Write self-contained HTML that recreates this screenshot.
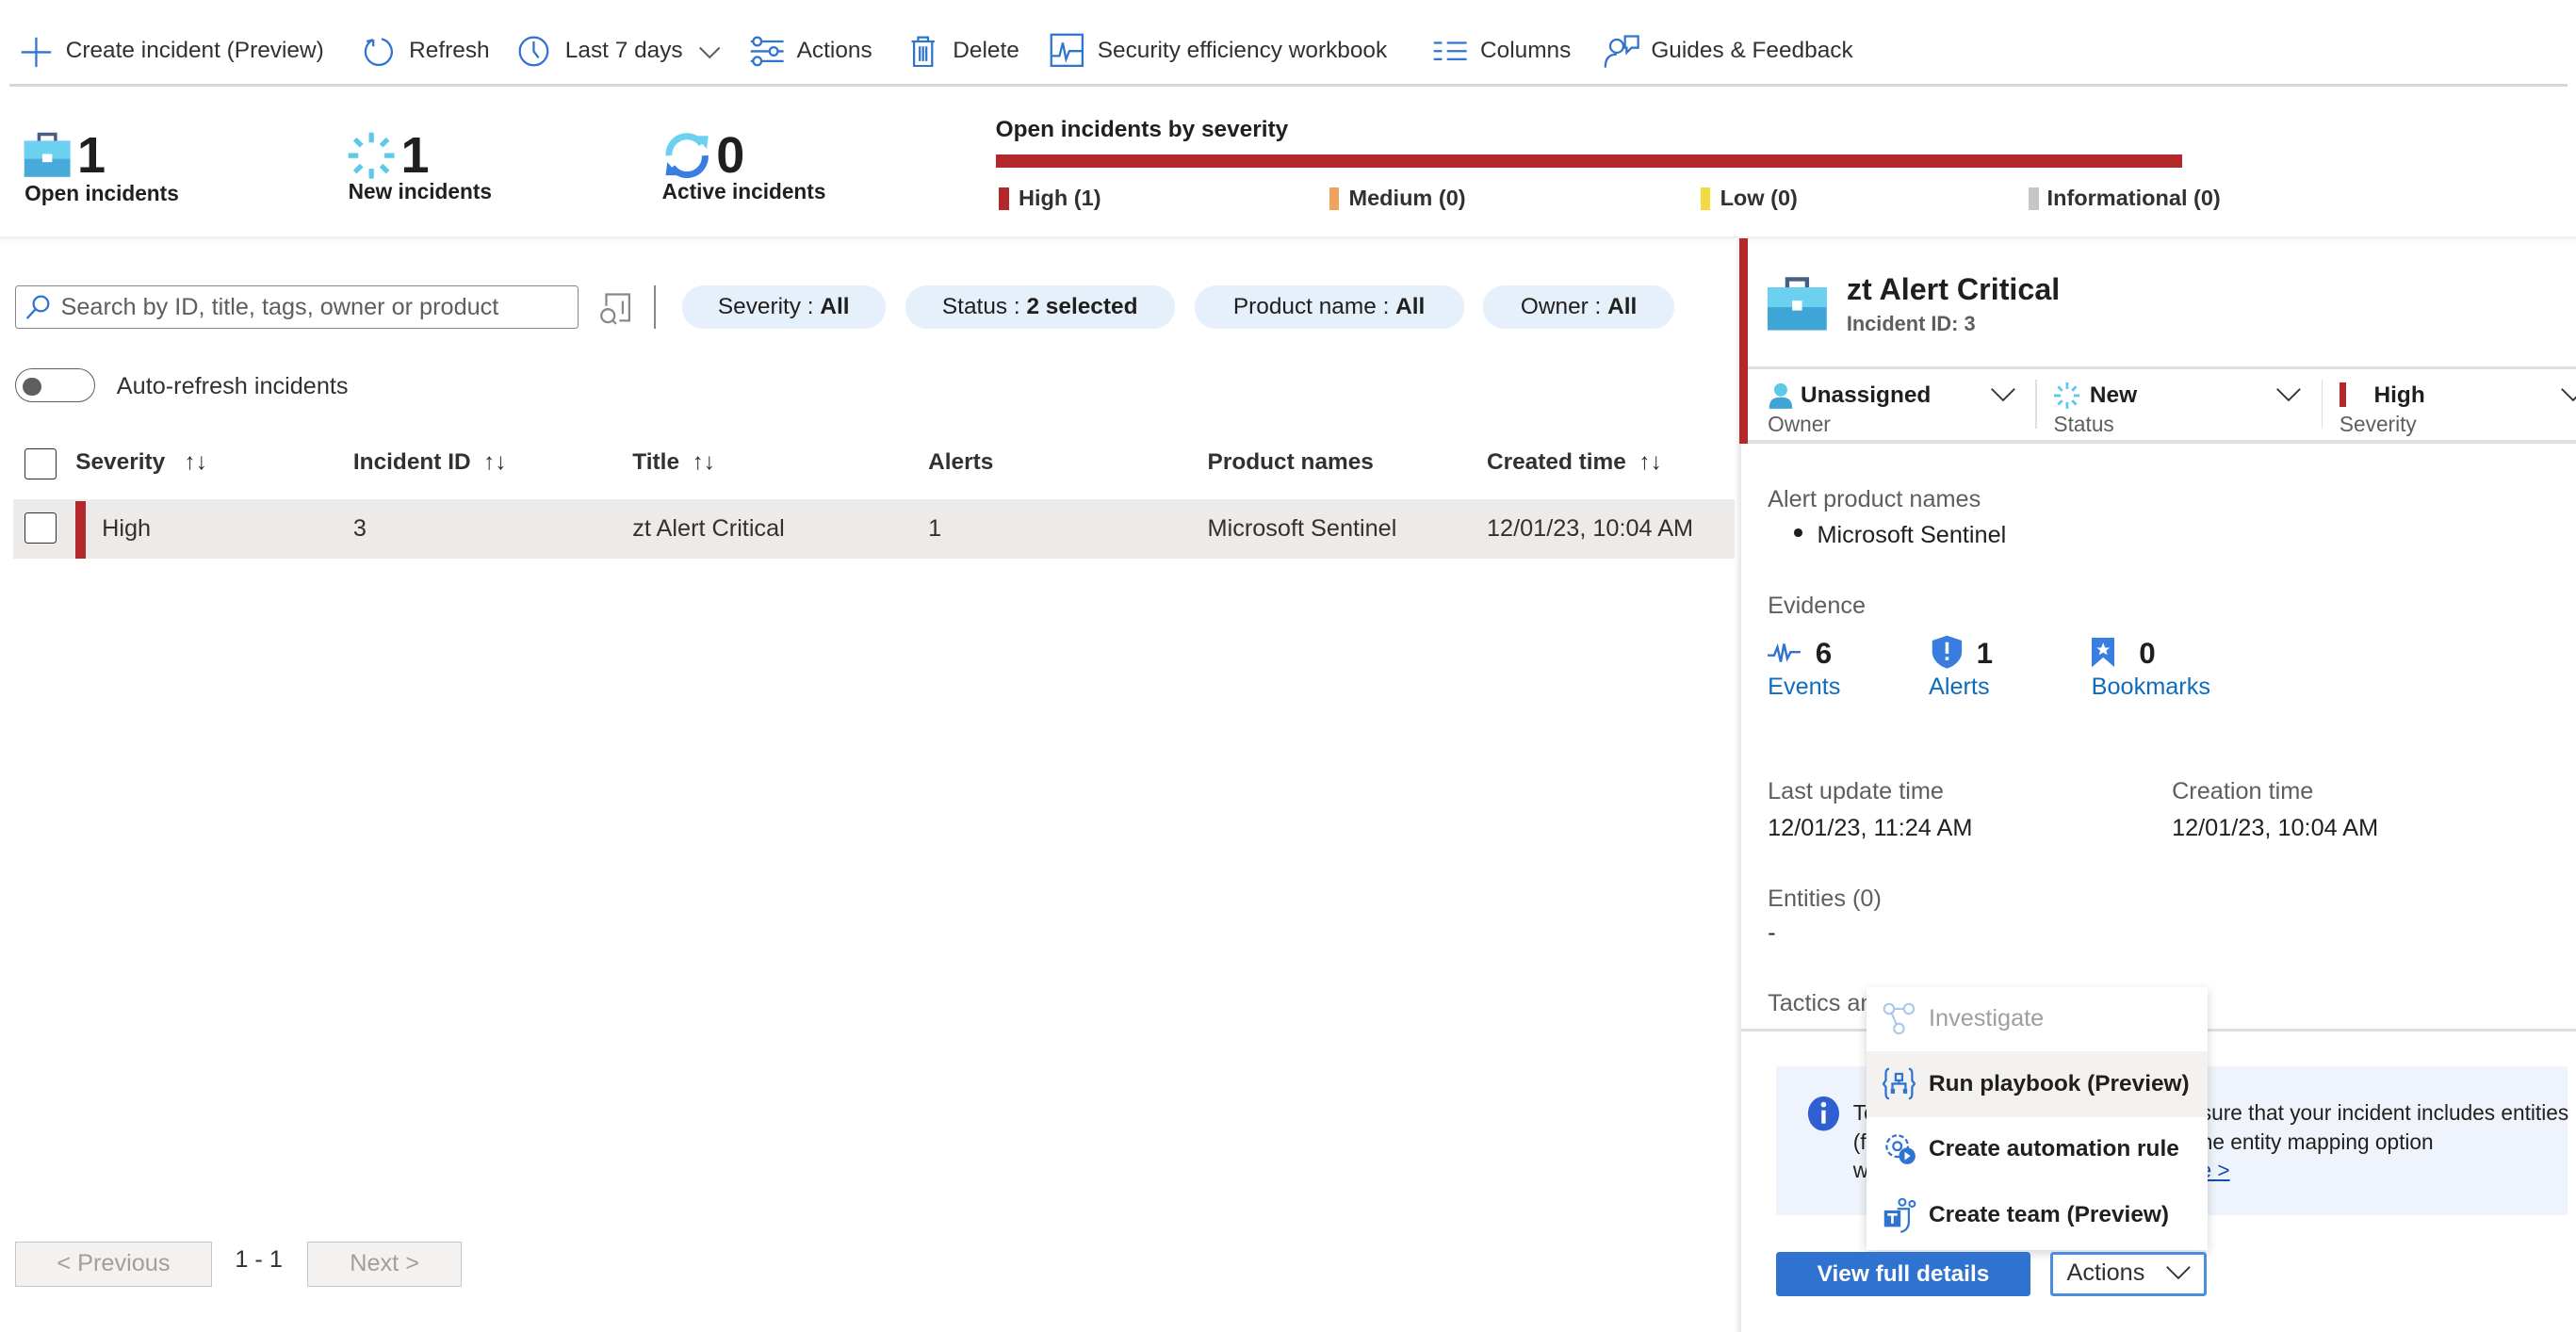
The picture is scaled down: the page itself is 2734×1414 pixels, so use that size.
<!DOCTYPE html>
<html><head><meta charset="utf-8"><style>
html,body{margin:0;padding:0;background:#fff;overflow:hidden;width:2734px;height:1414px}
#w{zoom:1.74362;position:relative;width:1568px;height:811px;font-family:"Liberation Sans",sans-serif;font-size:14px;color:#323130}
.a{position:absolute;white-space:nowrap;line-height:1}
.b{font-weight:bold}
.blue{color:#0f6cbd}
.pill{position:absolute;top:174px;height:26px;border-radius:13px;background:#e6f0fb;line-height:26px;text-align:center;font-size:14px;color:#201f1e}
svg{position:absolute}
.ic{stroke:#2f74d0;fill:none;stroke-width:1.3}
</style></head><body><div id="w">
<!-- toolbar -->
<svg style="left:12px;top:22px" width="20" height="20"><path class="ic" d="M10 1V19M1 10H19"/></svg>
<div class="a" style="left:40px;top:24px">Create incident (Preview)</div>
<svg style="left:220px;top:21px" width="20" height="20"><path class="ic" d="M7 3A8 8 0 1 0 12 2.5M7 3L7 7M7 3L3 4"/></svg>
<div class="a" style="left:249px;top:24px">Refresh</div>
<svg style="left:315px;top:21px" width="20" height="20"><circle class="ic" cx="10" cy="10" r="8.5"/><path class="ic" d="M10 4V10L13 14"/></svg>
<div class="a" style="left:344px;top:24px">Last 7 days</div>
<svg style="left:425px;top:27px" width="14" height="10"><path d="M1 2L7 8L13 2" stroke="#605e5c" fill="none" stroke-width="1.2"/></svg>
<svg style="left:456px;top:21px" width="22" height="20"><path class="ic" d="M1 4H21M1 10H21M1 16H21"/><circle cx="5" cy="4" r="2.5" fill="#fff" stroke="#2f74d0" stroke-width="1.3"/><circle cx="15" cy="10" r="2.5" fill="#fff" stroke="#2f74d0" stroke-width="1.3"/><circle cx="5" cy="16" r="2.5" fill="#fff" stroke="#2f74d0" stroke-width="1.3"/></svg>
<div class="a" style="left:485px;top:24px">Actions</div>
<svg style="left:553px;top:21px" width="18" height="20"><path class="ic" d="M2 4H16M6 4V1.5H12V4M3.5 4V19H14.5V4M7 7V16M9 7V16M11 7V16"/></svg>
<div class="a" style="left:580px;top:24px">Delete</div>
<svg style="left:639px;top:20px" width="21" height="21"><rect class="ic" x="1" y="1" width="19" height="19"/><path class="ic" d="M1 14H6L8 6L10 16L12 11H20"/></svg>
<div class="a" style="left:668px;top:24px">Security efficiency workbook</div>
<svg style="left:872px;top:24px" width="22" height="14"><path class="ic" d="M1 2H6M1 7H6M1 12H6M9 2H21M9 7H21M9 12H21"/></svg>
<div class="a" style="left:901px;top:24px">Columns</div>
<svg style="left:976px;top:20px" width="22" height="22"><circle class="ic" cx="8" cy="8" r="4"/><path class="ic" d="M1 21C1 15 4 13 8 13M13 2H21V9H17L14 12V9H13Z"/></svg>
<div class="a" style="left:1005px;top:24px">Guides &amp; Feedback</div>
<div style="position:absolute;left:6px;top:51px;width:1557px;height:2px;background:#d6d6d6"></div>

<!-- stats -->
<svg style="left:14px;top:80px" width="30" height="30"><path d="M10 6V2H20V6" stroke="#4a5d85" stroke-width="2" fill="none"/><rect x="1" y="6" width="28" height="22" fill="#49a9d8"/><rect x="1" y="6" width="28" height="11" fill="#6cd0f0"/><rect x="12" y="14" width="6" height="5" fill="#fff"/></svg>
<div class="a" style="left:47px;top:79px;font-size:31px;color:#201f1e;font-weight:600">1</div>
<div class="a" style="left:15px;top:111px;font-size:13px;font-weight:600;color:#201f1e">Open incidents</div>
<svg style="left:211px;top:80px" width="30" height="30"><g stroke="#5cc8ea" stroke-width="3"><path d="M15 1V7M15 23V29M1 15H7M23 15H29M5 5L9 9M21 21L25 25M25 5L21 9M5 25L9 21"/></g></svg>
<div class="a" style="left:244px;top:79px;font-size:31px;color:#201f1e;font-weight:600">1</div>
<div class="a" style="left:212px;top:110px;font-size:13px;font-weight:600;color:#201f1e">New incidents</div>
<svg style="left:403px;top:80px" width="30" height="30"><path d="M4 15A11 11 0 0 1 24 8" stroke="#6cd0f0" stroke-width="4" fill="none"/><path d="M26 15A11 11 0 0 1 6 22" stroke="#3a7de0" stroke-width="4" fill="none"/><path d="M20 3L28 3L27 11Z" fill="#6cd0f0"/><path d="M10 27L2 27L3 19Z" fill="#3a7de0"/></svg>
<div class="a" style="left:436px;top:79px;font-size:31px;color:#201f1e;font-weight:600">0</div>
<div class="a" style="left:403px;top:110px;font-size:13px;font-weight:600;color:#201f1e">Active incidents</div>
<div class="a" style="left:606px;top:72px;font-size:14px;font-weight:600;color:#201f1e">Open incidents by severity</div>
<div style="position:absolute;left:606px;top:94px;width:722px;height:8px;background:#b3282b"></div>
<div style="position:absolute;left:608px;top:114px;width:6px;height:14px;background:#b3282b"></div>
<div class="a" style="left:620px;top:114px;font-weight:600;font-size:13.5px">High (1)</div>
<div style="position:absolute;left:809px;top:114px;width:6px;height:14px;background:#f0a35e"></div>
<div class="a" style="left:821px;top:114px;font-weight:600;font-size:13.5px">Medium (0)</div>
<div style="position:absolute;left:1035px;top:114px;width:6px;height:14px;background:#f5d942"></div>
<div class="a" style="left:1047px;top:114px;font-weight:600;font-size:13.5px">Low (0)</div>
<div style="position:absolute;left:1235px;top:114px;width:6px;height:14px;background:#c8c6c4"></div>
<div class="a" style="left:1246px;top:114px;font-weight:600;font-size:13.5px">Informational (0)</div>
<div style="position:absolute;left:0;top:144px;width:1568px;height:4px;background:linear-gradient(#eeeeee,#fff)"></div>

<!-- filters -->
<div style="position:absolute;left:9px;top:174px;width:342px;height:25px;border:1px solid #8a8886;border-radius:2px"></div>
<svg style="left:15px;top:179px" width="16" height="16"><circle cx="10" cy="6" r="4.5" stroke="#2f74d0" fill="none" stroke-width="1.3"/><path d="M7 9L1.5 15" stroke="#2f74d0" stroke-width="1.3"/></svg>
<div class="a" style="left:37px;top:180px;font-size:14.5px;color:#605e5c">Search by ID, title, tags, owner or product</div>
<svg style="left:363px;top:177px" width="22" height="22"><path d="M6 9V2H20V18H14" stroke="#8a8886" fill="none" stroke-width="1.3"/><circle cx="7" cy="15" r="4" stroke="#8a8886" fill="none" stroke-width="1.3"/><path d="M10 18L12 20M16 6V14" stroke="#8a8886" stroke-width="1.3"/></svg>
<div style="position:absolute;left:398px;top:174px;width:1px;height:26px;background:#8a8886"></div>
<div class="pill" style="left:415px;width:124px">Severity : <b>All</b></div>
<div class="pill" style="left:551px;width:164px">Status : <b>2 selected</b></div>
<div class="pill" style="left:727px;width:164px">Product name : <b>All</b></div>
<div class="pill" style="left:903px;width:116px">Owner : <b>All</b></div>
<div style="position:absolute;left:9px;top:224px;width:48px;height:20px;border:1px solid #605e5c;border-radius:11px"></div>
<div style="position:absolute;left:14px;top:230px;width:11px;height:11px;border-radius:50%;background:#605e5c"></div>
<div class="a" style="left:71px;top:228px;font-size:14.5px">Auto-refresh incidents</div>

<!-- table -->
<div style="position:absolute;left:15px;top:273px;width:18px;height:18px;border:1px solid #323130;border-radius:2px"></div>
<div class="a b" style="left:46px;top:275px;font-size:14px">Severity&nbsp;&nbsp; ↑↓</div>
<div class="a b" style="left:215px;top:275px;font-size:14px">Incident ID&nbsp; ↑↓</div>
<div class="a b" style="left:385px;top:275px;font-size:14px">Title&nbsp; ↑↓</div>
<div class="a b" style="left:565px;top:275px;font-size:14px">Alerts</div>
<div class="a b" style="left:735px;top:275px;font-size:14px">Product names</div>
<div class="a b" style="left:905px;top:275px;font-size:14px">Created time&nbsp; ↑↓</div>
<div style="position:absolute;left:8px;top:304px;width:1050px;height:36px;background:#edebe9"></div>
<div style="position:absolute;left:15px;top:312px;width:18px;height:18px;border:1px solid #323130;border-radius:2px;background:#fff"></div>
<div style="position:absolute;left:46px;top:305px;width:6px;height:35px;background:#b3282b"></div>
<div class="a" style="left:62px;top:315px;font-size:14.5px">High</div>
<div class="a" style="left:215px;top:315px;font-size:14.5px">3</div>
<div class="a" style="left:385px;top:315px;font-size:14.5px">zt Alert Critical</div>
<div class="a" style="left:565px;top:315px;font-size:14.5px">1</div>
<div class="a" style="left:735px;top:315px;font-size:14.5px">Microsoft Sentinel</div>
<div class="a" style="left:905px;top:315px;font-size:14.5px">12/01/23, 10:04 AM</div>

<div style="position:absolute;left:9px;top:756px;width:119px;height:26px;border:1px solid #c8c6c4;background:#f3f2f1;color:#a19f9d;text-align:center;line-height:26px;font-size:14.5px">&lt; Previous</div>
<div class="a" style="left:143px;top:760px;font-size:14.5px">1 - 1</div>
<div style="position:absolute;left:187px;top:756px;width:93px;height:26px;border:1px solid #c8c6c4;background:#f3f2f1;color:#a19f9d;text-align:center;line-height:26px;font-size:14.5px">Next &gt;</div>

<!-- right panel -->
<div style="position:absolute;left:1056px;top:145px;width:4px;height:666px;background:linear-gradient(90deg,#fff,#e6e6e6)"></div>
<div style="position:absolute;left:1059px;top:145px;width:5px;height:125px;background:#b3282b"></div>
<svg style="left:1076px;top:168px" width="36" height="34"><path d="M12 7V2H24V7" stroke="#4a5d85" stroke-width="2.5" fill="none"/><rect x="0" y="7" width="36" height="26" fill="#3fa4d6"/><rect x="0" y="7" width="36" height="12" fill="#6cd0f0"/><rect x="15" y="15" width="6" height="6" fill="#fff"/></svg>
<div class="a" style="left:1124px;top:167px;font-size:18.5px;font-weight:600;color:#201f1e">zt Alert Critical</div>
<div class="a" style="left:1124px;top:191px;font-size:12.5px;font-weight:600;color:#605e5c">Incident ID: 3</div>
<div style="position:absolute;left:1064px;top:223px;width:504px;height:2px;background:#e1dfdd"></div>
<div style="position:absolute;left:1064px;top:268px;width:504px;height:2px;background:#e1dfdd"></div>
<svg style="left:1076px;top:233px" width="16" height="16"><circle cx="8" cy="4.5" r="4" fill="#5cc8ea"/><path d="M1 16C1 10 4 9 8 9C12 9 15 10 15 16Z" fill="#3fa4d6"/></svg>
<div class="a" style="left:1096px;top:234px;font-size:14px;font-weight:600;color:#201f1e">Unassigned</div>
<div class="a" style="left:1076px;top:252px;font-size:13px;color:#605e5c">Owner</div>
<svg style="left:1211px;top:236px" width="16" height="10"><path d="M1 1L8 8L15 1" stroke="#323130" fill="none" stroke-width="1.1"/></svg>
<div style="position:absolute;left:1239px;top:231px;width:1px;height:30px;background:#e1dfdd"></div>
<svg style="left:1250px;top:233px" width="16" height="16"><g stroke="#5cc8ea" stroke-width="1.6"><path d="M8 0V4M8 12V16M0 8H4M12 8H16M2.5 2.5L5 5M11 11L13.5 13.5M13.5 2.5L11 5M2.5 13.5L5 11"/></g></svg>
<div class="a" style="left:1272px;top:234px;font-size:14px;font-weight:600;color:#201f1e">New</div>
<div class="a" style="left:1250px;top:252px;font-size:13px;color:#605e5c">Status</div>
<svg style="left:1385px;top:236px" width="16" height="10"><path d="M1 1L8 8L15 1" stroke="#323130" fill="none" stroke-width="1.1"/></svg>
<div style="position:absolute;left:1413px;top:231px;width:1px;height:30px;background:#e1dfdd"></div>
<div style="position:absolute;left:1424px;top:233px;width:4px;height:15px;background:#b3282b"></div>
<div class="a" style="left:1445px;top:234px;font-size:14px;font-weight:600;color:#201f1e">High</div>
<div class="a" style="left:1424px;top:252px;font-size:13px;color:#605e5c">Severity</div>
<svg style="left:1558px;top:236px" width="16" height="10"><path d="M1 1L8 8L15 1" stroke="#323130" fill="none" stroke-width="1.1"/></svg>

<div class="a" style="left:1076px;top:297px;font-size:14.5px;color:#605e5c">Alert product names</div>
<div style="position:absolute;left:1092px;top:322px;width:5px;height:5px;border-radius:50%;background:#201f1e"></div>
<div class="a" style="left:1106px;top:319px;font-size:14.5px;color:#201f1e">Microsoft Sentinel</div>
<div class="a" style="left:1076px;top:362px;font-size:14.5px;color:#605e5c">Evidence</div>
<svg style="left:1076px;top:390px" width="20" height="16"><path d="M0 9H4L6 4L8 13L10 2L12 11L14 7H20" stroke="#2f74d0" fill="none" stroke-width="1.4"/></svg>
<div class="a" style="left:1105px;top:389px;font-size:18px;font-weight:600;color:#201f1e">6</div>
<div class="a blue" style="left:1076px;top:411px;font-size:14.5px">Events</div>
<svg style="left:1175px;top:386px" width="20" height="22"><path d="M10 1L19 4V11C19 16 14 20 10 21C6 20 1 16 1 11V4Z" fill="#3a7de0"/><path d="M10 5V12M10 14V16" stroke="#fff" stroke-width="2"/></svg>
<div class="a" style="left:1203px;top:389px;font-size:18px;font-weight:600;color:#201f1e">1</div>
<div class="a blue" style="left:1174px;top:411px;font-size:14.5px">Alerts</div>
<svg style="left:1273px;top:388px" width="14" height="18"><path d="M0 0H14V18L7 12L0 18Z" fill="#3a7de0"/><path d="M7 3L8.2 6H11L8.8 7.8L9.6 10.5L7 9L4.4 10.5L5.2 7.8L3 6H5.8Z" fill="#fff"/></svg>
<div class="a" style="left:1302px;top:389px;font-size:18px;font-weight:600;color:#201f1e">0</div>
<div class="a blue" style="left:1273px;top:411px;font-size:14.5px">Bookmarks</div>

<div class="a" style="left:1076px;top:475px;font-size:14.5px;color:#605e5c">Last update time</div>
<div class="a" style="left:1076px;top:497px;font-size:14.5px;color:#201f1e">12/01/23, 11:24 AM</div>
<div class="a" style="left:1322px;top:475px;font-size:14.5px;color:#605e5c">Creation time</div>
<div class="a" style="left:1322px;top:497px;font-size:14.5px;color:#201f1e">12/01/23, 10:04 AM</div>
<div class="a" style="left:1076px;top:540px;font-size:14.5px;color:#605e5c">Entities (0)</div>
<div class="a" style="left:1076px;top:561px;font-size:14.5px;color:#201f1e">-</div>
<div class="a" style="left:1076px;top:604px;font-size:14.5px;color:#605e5c">Tactics and techniques</div>
<div style="position:absolute;left:1060px;top:626px;width:508px;height:2px;background:#e1dfdd"></div>

<div style="position:absolute;left:1081px;top:649px;width:482px;height:91px;background:#eff4fc"></div>
<svg style="left:1100px;top:667px" width="20" height="22"><ellipse cx="10" cy="11" rx="9.5" ry="10.5" fill="#2f5fd0"/><path d="M10 9V17" stroke="#fff" stroke-width="2.5"/><circle cx="10" cy="5.5" r="1.6" fill="#fff"/></svg>
<div class="a" style="left:1128px;top:671px;font-size:13px;color:#201f1e">To get more investigation info, make sure that your incident includes entities</div>
<div class="a" style="left:1128px;top:689px;font-size:13px;color:#201f1e">(for example, accounts, hosts). Use the entity mapping option</div>
<div class="a" style="left:1128px;top:706px;font-size:13px;color:#201f1e">when you configure rules. <span style="color:#0f4fa8;text-decoration:underline">Learn more &gt;</span></div>

<!-- dropdown menu -->
<div style="position:absolute;left:1136px;top:601px;width:208px;height:160px;background:#fff;box-shadow:0 2px 6px rgba(0,0,0,.18)"></div>
<div style="position:absolute;left:1136px;top:640px;width:208px;height:40px;background:#f3f2f1"></div>
<svg style="left:1146px;top:610px" width="20" height="20"><circle cx="4" cy="4" r="3" stroke="#a9c8ef" fill="none" stroke-width="1.2"/><circle cx="16" cy="4" r="3" stroke="#a9c8ef" fill="none" stroke-width="1.2"/><circle cx="10" cy="16" r="3" stroke="#a9c8ef" fill="none" stroke-width="1.2"/><path d="M7 4H13M5.5 6.5L8.5 13.5" stroke="#a9c8ef" stroke-width="1.2"/></svg>
<div class="a" style="left:1174px;top:613px;font-size:14.5px;color:#a19f9d">Investigate</div>
<svg style="left:1146px;top:650px" width="20" height="20"><path d="M4 1C2 1 2 3 2 5V8L0.5 10L2 12V15C2 17 2 19 4 19M16 1C18 1 18 3 18 5V8L19.5 10L18 12V15C18 17 18 19 16 19" stroke="#2f74d0" fill="none" stroke-width="1.3"/><rect x="8" y="4" width="4" height="4" stroke="#2f74d0" fill="none" stroke-width="1.3"/><path d="M10 8V10M6 13V10H14V13" stroke="#2f74d0" fill="none" stroke-width="1.3"/><rect x="5" y="13" width="2.5" height="3" fill="#2f74d0"/><rect x="12.5" y="13" width="2.5" height="3" fill="#2f74d0"/></svg>
<div class="a" style="left:1174px;top:653px;font-size:14px;font-weight:600;color:#201f1e">Run playbook (Preview)</div>
<svg style="left:1146px;top:689px" width="22" height="22"><circle cx="9" cy="9" r="6.5" stroke="#2f74d0" fill="none" stroke-width="1.3" stroke-dasharray="3 1.5"/><circle cx="9" cy="9" r="2.5" stroke="#2f74d0" fill="none" stroke-width="1.3"/><circle cx="15" cy="15" r="5" fill="#2f74d0"/><path d="M13.5 12.5V17.5L17 15Z" fill="#fff"/></svg>
<div class="a" style="left:1174px;top:693px;font-size:14px;font-weight:600;color:#201f1e">Create automation rule</div>
<svg style="left:1146px;top:729px" width="22" height="22"><circle cx="12" cy="3" r="2" stroke="#2f74d0" fill="none" stroke-width="1.2"/><circle cx="18" cy="4" r="1.7" stroke="#2f74d0" fill="none" stroke-width="1.2"/><path d="M9 7H16V15C16 19 13 21 11 21" stroke="#2f74d0" fill="none" stroke-width="1.3"/><rect x="1" y="8" width="10" height="10" fill="#2f74d0"/><path d="M3 10.5H9M6 10.5V16" stroke="#fff" stroke-width="1.5"/></svg>
<div class="a" style="left:1174px;top:733px;font-size:14px;font-weight:600;color:#201f1e">Create team (Preview)</div>

<div style="position:absolute;left:1081px;top:762px;width:155px;height:27px;background:#2f72cf;border-radius:2px;color:#fff;font-weight:600;font-size:14px;text-align:center;line-height:27px">View full details</div>
<div style="position:absolute;left:1248px;top:762px;width:92px;height:24px;border:2px solid #4a8ee0;border-radius:2px;background:#fff"></div>
<div class="a" style="left:1258px;top:768px;font-size:14.5px;color:#323130">Actions</div>
<svg style="left:1318px;top:770px" width="16" height="10"><path d="M1 1L8 8L15 1" stroke="#323130" fill="none" stroke-width="1.1"/></svg>
</div></body></html>
